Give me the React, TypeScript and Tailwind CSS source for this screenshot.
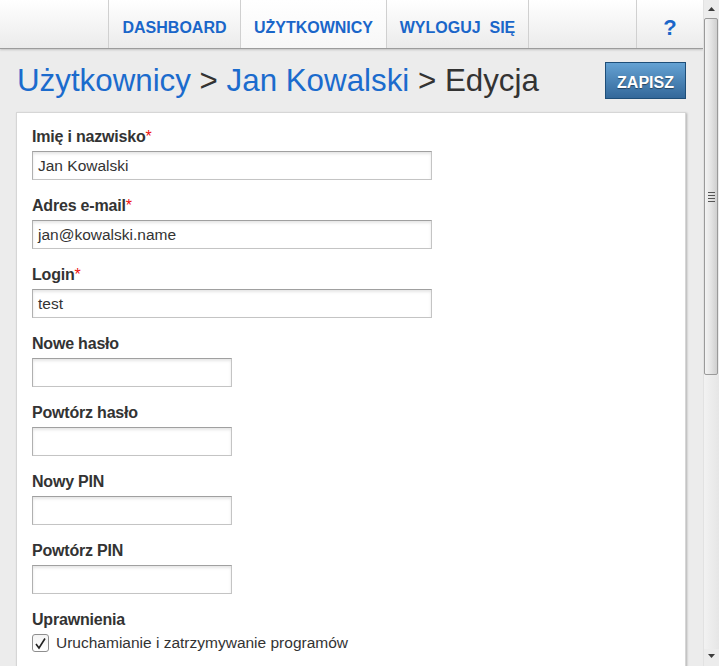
import React from "react";

const navItem =
  "h-full flex items-center justify-center pt-[7px] border-l border-[#d0d0d0] text-[16px] font-bold text-[#1a66c9]";

const Field = ({
  label,
  required,
  value,
  wide,
}: {
  label: string;
  required?: boolean;
  value?: string;
  wide?: boolean;
}) => (
  <div className="mb-[17px]">
    <div className="h-[18px] leading-[18px] mb-[5px] text-[16px] font-bold text-[#333] tracking-[-0.2px]">
      {label}
      {required && <span className="text-[#e11] font-normal">*</span>}
    </div>
    <div
      className={`h-[29px] ${wide ? "w-[400px]" : "w-[200px]"} border border-[#c4c4c4] border-t-[#a0a0a0] border-l-[#b0b0b0] bg-white shadow-[inset_0_2px_3px_rgba(0,0,0,0.1)] flex items-center pl-[5px] text-[15.5px] text-[#333]`}
    >
      {value}
    </div>
  </div>
);

const Scrollbar = () => (
  <div className="w-[16px] h-full flex flex-col bg-[#ececec] border-l border-[#e2e2e2]">
    <div className="h-[18px] flex items-center justify-center">
      <svg width="7" height="4" viewBox="0 0 7 4">
        <path d="M0 4 L3.5 0 L7 4 Z" fill="#3c3c3c" />
      </svg>
    </div>
    <div className="h-[357px] mr-[1px] rounded-[2px] border border-[#9a9a9a] bg-gradient-to-r from-[#f3f3f3] via-[#e4e4e4] to-[#cfcfcf] flex items-center justify-center">
      <div className="flex flex-col gap-[2px]">
        <div className="w-[7px] h-px bg-[#555]" />
        <div className="w-[7px] h-px bg-[#555]" />
        <div className="w-[7px] h-px bg-[#555]" />
        <div className="w-[7px] h-px bg-[#555]" />
      </div>
    </div>
    <div className="flex-1 bg-gradient-to-r from-[#f2f2f2] to-[#e6e6e6]" />
    <div className="h-[17px] flex items-start justify-center pt-[5px] bg-[#ececec]">
      <svg width="7" height="4" viewBox="0 0 7 4">
        <path d="M0 0 L7 0 L3.5 4 Z" fill="#3c3c3c" />
      </svg>
    </div>
  </div>
);

export default function App() {
  return (
    <div
      className="w-[719px] h-[666px] flex overflow-hidden bg-[#ececec]"
      style={{ fontFamily: '"Liberation Sans", Arial, sans-serif' }}
    >
      <div className="w-[703px] h-full flex flex-col">
        <nav className="h-[49px] shrink-0 flex bg-gradient-to-b from-white to-[#ebebeb] border-b border-[#9c9c9c] shadow-[0_1px_2px_rgba(0,0,0,0.18)]">
          <div className="w-[108px] h-full" />
          <a className={`${navItem} w-[132px]`}>DASHBOARD</a>
          <a className={`${navItem} w-[146px] bg-gradient-to-b from-white to-[#f7f7f7]`}>
            UŻYTKOWNICY
          </a>
          <a className={`${navItem} w-[142px] whitespace-pre`}>WYLOGUJ  SIĘ</a>
          <div className="w-[108px] h-full border-l border-[#d0d0d0]" />
          <a className={`${navItem} w-[67px] text-[22px]`}>?</a>
        </nav>

        <main className="flex-1 pl-[16px] pr-[17px] pt-[13px]">
          <div className="flex items-start justify-between">
            <h1 className="mt-[1px] h-[36px] leading-[36px] text-[31.3px] text-[#333] whitespace-nowrap pl-px">
              <a className="text-[#1b6bcd]">Użytkownicy</a> &gt;{" "}
              <a className="text-[#1b6bcd]">Jan Kowalski</a> &gt; Edycja
            </h1>
            <button className="w-[81px] h-[37px] pt-[4px] border border-[#1e4e78] bg-gradient-to-b from-[#65a2d3] to-[#33689a] text-white text-[16px] font-bold [text-shadow:0_1px_1px_rgba(0,0,0,0.45)]">
              ZAPISZ
            </button>
          </div>

          <div className="mt-[13px] bg-white border border-[#d6d6d6] shadow-[1px_1px_2px_rgba(0,0,0,0.25)] pt-[15px] pl-[15px] h-[600px]">
            <Field label="Imię i nazwisko" required value="Jan Kowalski" wide />
            <Field label="Adres e-mail" required value="jan@kowalski.name" wide />
            <Field label="Login" required value="test" wide />
            <Field label="Nowe hasło" />
            <Field label="Powtórz hasło" />
            <Field label="Nowy PIN" />
            <Field label="Powtórz PIN" />
            <div className="h-[18px] leading-[18px] mb-[5px] text-[16px] font-bold text-[#333] tracking-[-0.2px]">
              Uprawnienia
            </div>
            <label className="flex items-center gap-[7px] h-[18px] text-[15.5px] text-[#333]">
              <span className="w-[17px] h-[18px] rounded-[3px] border border-[#8e8e8e] bg-gradient-to-b from-[#f4f4f4] to-white flex items-center justify-center">
                <svg width="13" height="13" viewBox="0 0 13 13">
                  <path d="M2 7 L5 11 L11 1.5" fill="none" stroke="#222" strokeWidth="1.6" />
                </svg>
              </span>
              Uruchamianie i zatrzymywanie programów
            </label>
          </div>
        </main>
      </div>
      <Scrollbar />
    </div>
  );
}
